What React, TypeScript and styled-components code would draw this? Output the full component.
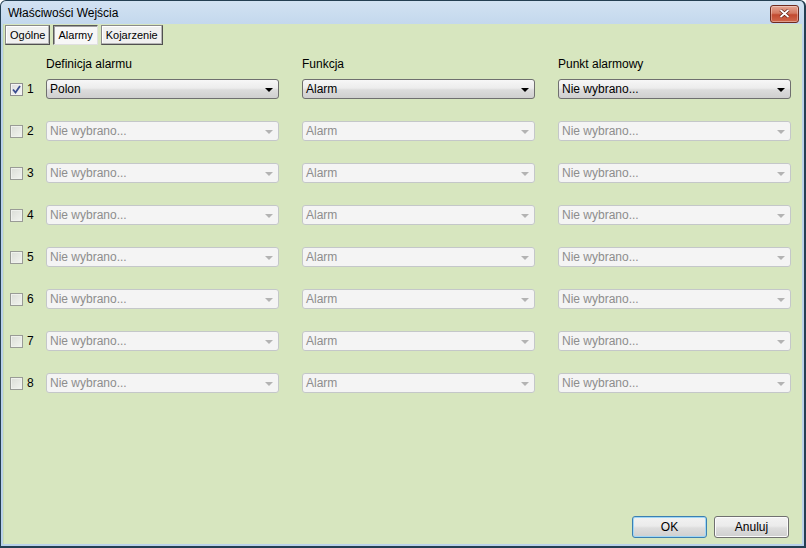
import styled, { createGlobalStyle } from "styled-components";

const GlobalStyle = createGlobalStyle`
  html, body {
    margin: 0;
    padding: 0;
    background: #ffffff;
  }
  body {
    font-family: "Liberation Sans", Arial, sans-serif;
    font-size: 12px;
  }
`;

const Window = styled.div`
  width: 806px;
  height: 548px;
  box-sizing: border-box;
  display: flex;
  flex-direction: column;
  border: 1px solid #243f52;
  border-right-width: 2px;
  border-bottom-width: 2px;
  border-radius: 6px 6px 0 0;
  background: linear-gradient(#d2e2f2, #b9d1ea 40px, #b9d1ea);
  overflow: hidden;
`;

const TitleBar = styled.div`
  height: 23px;
  display: flex;
  align-items: center;
  justify-content: space-between;
  padding: 0 5px 0 7px;
  flex-shrink: 0;
`;

const Title = styled.span`
  font-size: 12px;
  color: #000;
`;

const CloseButton = styled.div`
  width: 27px;
  height: 16px;
  margin-top: 2px;
  border: 1px solid #6e2a1e;
  border-radius: 3px;
  background: linear-gradient(#e5a593, #d47a62 45%, #c24a30 55%, #d0684c);
  display: flex;
  align-items: center;
  justify-content: center;
  box-shadow: inset 0 0 0 1px rgba(255, 255, 255, 0.35);
`;

const Body = styled.div`
  flex: 1;
  margin: 0 2px 2px 2px;
  background: #d7e6bf;
  display: flex;
  flex-direction: column;
  border-left: 1px solid #c8dbb0;
`;

const TabBar = styled.div`
  display: flex;
  gap: 3px;
  padding: 1px 0 0 1px;
`;

const Tab = styled.div<{ $active?: boolean }>`
  height: 20px;
  box-sizing: border-box;
  padding: 0 4px;
  display: flex;
  align-items: center;
  font-size: 11px;
  color: #000;
  background: ${(p) => (p.$active ? "#f7f7f7" : "#f0f0f0")};
  border: 1px solid ${(p) => (p.$active ? "#5a5a5a" : "#8a8a8a")};
  border-right-color: ${(p) => (p.$active ? "#e0e0e0" : "#505050")};
  border-bottom-color: ${(p) => (p.$active ? "#e0e0e0" : "#505050")};
  box-shadow: ${(p) =>
    p.$active ? "inset 1px 1px 0 #a0a0a0" : "inset -1px -1px 0 #b5b5b5, inset 1px 1px 0 #ffffff"};
`;

const Columns = styled.div`
  display: grid;
  grid-template-columns: 36px repeat(3, 256px);
  padding-left: 6px;
`;

const Headers = styled(Columns)`
  margin-top: 12px;
  margin-bottom: 8px;
`;

const Rows = styled(Columns)`
  grid-auto-rows: 20px;
  row-gap: 22px;
`;

const ColumnHeader = styled.div`
  font-size: 12px;
  color: #000;
  line-height: 14px;
`;

const RowLabel = styled.label`
  display: flex;
  align-items: center;
  gap: 4px;
  font-size: 12px;
  color: #000;
`;

const Box = styled.span<{ $checked?: boolean }>`
  width: 13px;
  height: 13px;
  box-sizing: border-box;
  border: 1px solid #8f8f8f;
  background: linear-gradient(135deg, #dcdcdc, #f8f8f8);
  box-shadow: inset 0 0 0 1px #f4f4f4;
  display: flex;
  align-items: center;
  justify-content: center;
  opacity: ${(p) => (p.$checked ? 1 : 0.85)};
`;

const Combo = styled.div<{ $disabled?: boolean }>`
  width: 233px;
  height: 20px;
  box-sizing: border-box;
  border: 1px solid ${(p) => (p.$disabled ? "#c4c7c9" : "#6f6f6f")};
  border-radius: 3px;
  background: ${(p) =>
    p.$disabled ? "#f4f4f4" : "linear-gradient(#f7f7f7, #ececec 45%, #dcdcdc 55%, #cfcfcf)"};
  color: ${(p) => (p.$disabled ? "#8d8d8d" : "#000")};
  display: flex;
  align-items: center;
  justify-content: space-between;
  padding: 0 5px 0 3px;
  font-size: 12px;
`;

const Arrow = styled.span<{ $disabled?: boolean }>`
  width: 0;
  height: 0;
  border-left: 4px solid transparent;
  border-right: 4px solid transparent;
  border-top: 4px solid ${(p) => (p.$disabled ? "#b3b3b3" : "#000")};
  margin-top: 1px;
`;

const Footer = styled.div`
  margin-top: auto;
  display: flex;
  justify-content: flex-end;
  gap: 7px;
  padding: 0 13px 6px 0;
`;

const Button = styled.div<{ $default?: boolean }>`
  width: 75px;
  height: 22px;
  box-sizing: border-box;
  border: 1px solid ${(p) => (p.$default ? "#3c7fb1" : "#707070")};
  border-radius: 3px;
  background: linear-gradient(#f2f2f2, #ebebeb 45%, #dddddd 55%, #cfcfcf);
  box-shadow: ${(p) => (p.$default ? "inset 0 0 0 1px #9fd6f5" : "inset 0 0 0 1px #fbfbfb")};
  display: flex;
  align-items: center;
  justify-content: center;
  font-size: 12px;
  color: #000;
`;

type Row = { checked: boolean; def: string; fn: string; point: string };

const rows: Row[] = [
  { checked: true, def: "Polon", fn: "Alarm", point: "Nie wybrano..." },
  ...Array.from({ length: 7 }, () => ({
    checked: false,
    def: "Nie wybrano...",
    fn: "Alarm",
    point: "Nie wybrano...",
  })),
];

function Check() {
  return (
    <svg width="9" height="9" viewBox="0 0 9 9">
      <path d="M1 4.5 L3.5 7.5 L8 1" fill="none" stroke="#3a4d8f" strokeWidth="1.8" />
    </svg>
  );
}

function Select({ value, disabled }: { value: string; disabled?: boolean }) {
  return (
    <Combo $disabled={disabled}>
      <span>{value}</span>
      <Arrow $disabled={disabled} />
    </Combo>
  );
}

export default function App() {
  return (
    <>
      <GlobalStyle />
      <Window>
        <TitleBar>
          <Title>Właściwości Wejścia</Title>
          <CloseButton>
            <svg width="11" height="9" viewBox="0 0 11 9">
              <path d="M1.5 1 L9.5 8 M9.5 1 L1.5 8" stroke="#5a1a10" strokeWidth="3.2" />
              <path d="M1.5 1 L9.5 8 M9.5 1 L1.5 8" stroke="#ffffff" strokeWidth="1.8" />
            </svg>
          </CloseButton>
        </TitleBar>
        <Body>
          <TabBar>
            <Tab>Ogólne</Tab>
            <Tab $active>Alarmy</Tab>
            <Tab>Kojarzenie</Tab>
          </TabBar>
          <Headers>
            <span />
            <ColumnHeader>Definicja alarmu</ColumnHeader>
            <ColumnHeader>Funkcja</ColumnHeader>
            <ColumnHeader>Punkt alarmowy</ColumnHeader>
          </Headers>
          <Rows>
            {rows.map((r, i) => [
              <RowLabel key={`l${i}`}>
                <Box $checked={r.checked}>{r.checked && <Check />}</Box>
                {i + 1}
              </RowLabel>,
              <Select key={`d${i}`} value={r.def} disabled={!r.checked} />,
              <Select key={`f${i}`} value={r.fn} disabled={!r.checked} />,
              <Select key={`p${i}`} value={r.point} disabled={!r.checked} />,
            ])}
          </Rows>
          <Footer>
            <Button $default>OK</Button>
            <Button>Anuluj</Button>
          </Footer>
        </Body>
      </Window>
    </>
  );
}
